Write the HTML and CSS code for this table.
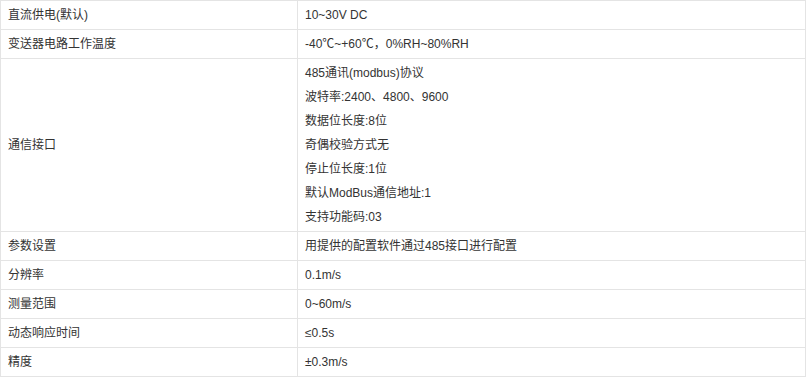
FILE: index.html
```html
<!DOCTYPE html>
<html lang="zh">
<head>
<meta charset="utf-8">
<link rel="stylesheet" href="styles.css">
</head>
<body>
<table class="spec">
  <colgroup><col class="c1"><col class="c2"></colgroup>
  <tr><td>直流供电(默认)</td><td>10~30V DC</td></tr>
  <tr><td>变送器电路工作温度</td><td>-40℃~+60℃，0%RH~80%RH</td></tr>
  <tr><td>通信接口</td><td>
    <p>485通讯(modbus)协议</p>
    <p>波特率:2400、4800、9600</p>
    <p>数据位长度:8位</p>
    <p>奇偶校验方式无</p>
    <p>停止位长度:1位</p>
    <p>默认ModBus通信地址:1</p>
    <p>支持功能码:03</p>
  </td></tr>
  <tr><td>参数设置</td><td>用提供的配置软件通过485接口进行配置</td></tr>
  <tr><td>分辨率</td><td>0.1m/s</td></tr>
  <tr><td>测量范围</td><td>0~60m/s</td></tr>
  <tr><td>动态响应时间</td><td>≤0.5s</td></tr>
  <tr><td>精度</td><td>±0.3m/s</td></tr>
</table>
</body>
</html>
```
FILE: styles.css
```css
html, body {
  margin: 0;
  padding: 0;
  background: #fff;
}
.spec {
  border-collapse: collapse;
  width: 806px;
  font-family: "Liberation Sans", "Noto Sans CJK SC", sans-serif;
  font-size: 12px;
  color: #333;
  table-layout: fixed;
}
.c1 { width: 297px; }
.spec td {
  border: 1px solid #e4e4e4;
  padding: 2px 7px;
  line-height: 24px;
  height: 24px;
  vertical-align: middle;
}
.spec p {
  margin: 0;
  line-height: 24px;
}
```
